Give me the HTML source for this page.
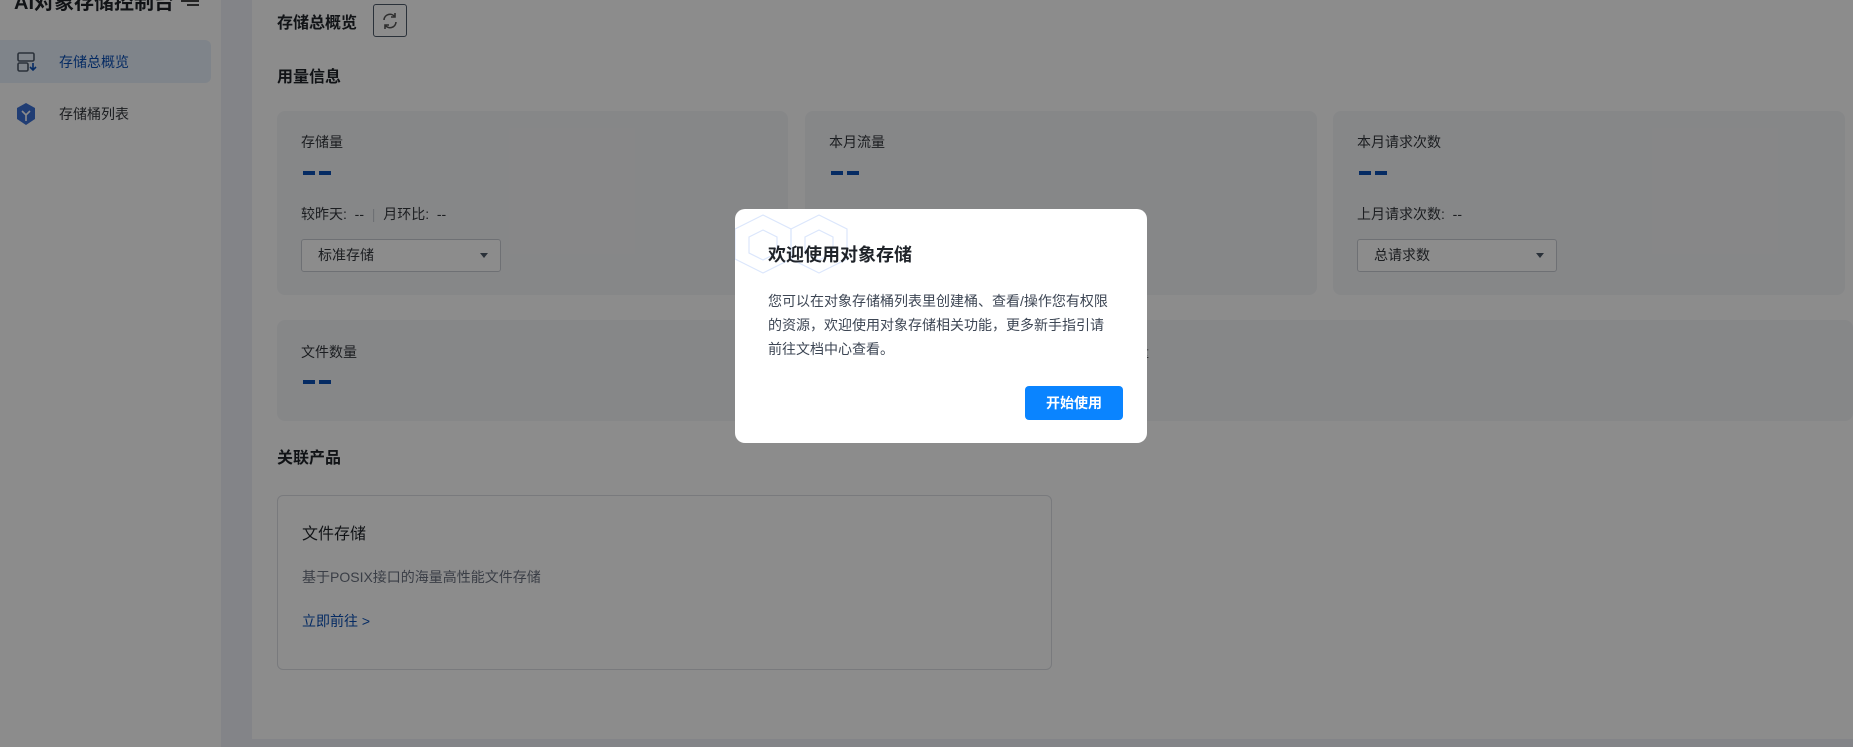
<!DOCTYPE html>
<html><head><meta charset="utf-8"><style>
*{margin:0;padding:0;box-sizing:border-box}
body{width:1853px;height:747px;position:relative;overflow:hidden;background:#eef1f7;font-family:"Liberation Sans","Noto Sans CJK SC",sans-serif;color:#1f2329}
.a{position:absolute}
.side{left:0;top:0;width:221px;height:747px;background:#fff}
.main{left:252px;top:0;width:1601px;height:739px;background:#fff}
.card{background:#f5f6f8;border-radius:8px}
.lbl{font-size:14px;color:#33373d}
.dash{width:12px;height:4px;background:#0a4fb5}
.sel{border:1px solid #c9cdd4;border-radius:3px;background:#fff;font-size:14px;color:#33373d;padding-left:16px;line-height:30px}
.sel:after{content:"";position:absolute;right:12px;top:13px;border:4px solid transparent;border-top:5px solid #4e5969}
.h{font-size:16px;font-weight:bold}
.ov{left:0;top:0;width:1853px;height:747px;background:rgba(0,0,0,0.45)}
.dlg{left:735px;top:209px;width:412px;height:234px;background:#fff;border-radius:10px;overflow:hidden}
</style></head><body>
<div class="a side"></div>
<div class="a" style="left:14px;top:-14px;font-size:20px;font-weight:bold;white-space:nowrap">AI对象存储控制台</div>
<div class="a" style="left:181px;top:0;width:18px;height:2px;background:#444"></div>
<div class="a" style="left:187px;top:4px;width:12px;height:2px;background:#444"></div>
<div class="a" style="left:0;top:40px;width:211px;height:43px;background:#e8f0fc;border-radius:0 6px 6px 0"></div>
<svg class="a" style="left:16px;top:51px" width="22" height="22" viewBox="0 0 22 22"><rect x="2" y="2" width="16" height="8" rx="1.5" fill="none" stroke="#4e5969" stroke-width="1.6"/><rect x="2" y="12" width="10" height="8" rx="1.5" fill="none" stroke="#4e5969" stroke-width="1.6"/><path d="M17 12v7m-3-3l3 3 3-3" stroke="#0a4fb5" stroke-width="1.6" fill="none"/></svg>
<div class="a" style="left:59px;top:52px;font-size:14px;color:#0a4fb5">存储总概览</div>
<svg class="a" style="left:15px;top:102px" width="22" height="24" viewBox="0 0 22 24"><path d="M11 1l9 5v11l-9 6-9-6V6z" fill="#3b6fd4"/><path d="M7 9l4 4 4-4M11 13v6" stroke="#fff" stroke-width="1.6" fill="none"/></svg>
<div class="a" style="left:59px;top:104px;font-size:14px;color:#33373d">存储桶列表</div>
<div class="a main"></div>
<div class="a h" style="left:277px;top:9px">存储总概览</div>
<div class="a" style="left:373px;top:4px;width:34px;height:33px;border:1px solid #4e5969;border-radius:3px"></div>
<svg class="a" style="left:380px;top:11px" width="20" height="20" viewBox="0 0 20 20" fill="none" stroke="#555" stroke-width="1.6"><path d="M4 9a6 6 0 0 1 11-3M16 11a6 6 0 0 1-11 3"/><path d="M15 2v4h-4M5 18v-4h4"/></svg>
<div class="a h" style="left:277px;top:63px">用量信息</div>

<div class="a card" style="left:277px;top:111px;width:511px;height:184px"></div>
<div class="a card" style="left:805px;top:111px;width:512px;height:184px"></div>
<div class="a card" style="left:1333px;top:111px;width:512px;height:184px"></div>
<div class="a lbl" style="left:301px;top:132px">存储量</div>
<div class="a dash" style="left:303px;top:171px"></div><div class="a dash" style="left:319px;top:171px"></div>
<div class="a lbl" style="left:301px;top:204px">较昨天: &nbsp;-- &nbsp;<span style="color:#c9cdd4">|</span>&nbsp; 月环比: &nbsp;--</div>
<div class="a sel" style="left:301px;top:239px;width:200px;height:33px">标准存储</div>
<div class="a lbl" style="left:829px;top:132px">本月流量</div>
<div class="a dash" style="left:831px;top:171px"></div><div class="a dash" style="left:847px;top:171px"></div>
<div class="a lbl" style="left:1357px;top:132px">本月请求次数</div>
<div class="a dash" style="left:1359px;top:171px"></div><div class="a dash" style="left:1375px;top:171px"></div>
<div class="a lbl" style="left:1357px;top:204px">上月请求次数: &nbsp;--</div>
<div class="a sel" style="left:1357px;top:239px;width:200px;height:33px">总请求数</div>

<div class="a card" style="left:277px;top:320px;width:775px;height:101px"></div>
<div class="a card" style="left:1069px;top:320px;width:784px;height:101px"></div>
<div class="a lbl" style="left:301px;top:342px">文件数量</div>
<div class="a dash" style="left:303px;top:380px"></div><div class="a dash" style="left:319px;top:380px"></div>
<div class="a lbl" style="left:1093px;top:342px">对象数量</div>

<div class="a h" style="left:277px;top:444px">关联产品</div>
<div class="a" style="left:277px;top:495px;width:775px;height:175px;border:1px solid #dcdfe4;border-radius:6px"></div>
<div class="a" style="left:302px;top:520px;font-size:16px">文件存储</div>
<div class="a" style="left:302px;top:567px;font-size:14px;color:#6b7280">基于POSIX接口的海量高性能文件存储</div>
<div class="a" style="left:302px;top:611px;font-size:14px;color:#0a4fb5">立即前往 &gt;</div>

<div class="a ov"></div>
<div class="a dlg">
<svg class="a" style="left:0;top:0" width="120" height="70" viewBox="0 0 120 70" fill="none" stroke="#dbe6fb" stroke-width="1.2"><path d="M0 20l28-14 28 14v30l-28 14L0 50z"/><path d="M56 20l28-14 28 14v30l-28 14-28-14z"/><path d="M14 28l14-7 14 7v16l-14 7-14-7zM70 28l14-7 14 7v16l-14 7-14-7z"/></svg>
<div class="a" style="left:33px;top:32px;font-size:18px;font-weight:bold;color:#1f2329">欢迎使用对象存储</div>
<div class="a" style="left:33px;top:80px;width:344px;font-size:14px;line-height:24px;color:#3d4654">您可以在对象存储桶列表里创建桶、查看/操作您有权限的资源，欢迎使用对象存储相关功能，更多新手指引请前往文档中心查看。</div>
<div class="a" style="left:290px;top:177px;width:98px;height:34px;background:#0a84ff;border-radius:4px;color:#fff;font-size:14px;font-weight:bold;text-align:center;line-height:34px">开始使用</div>
</div>
</body></html>
